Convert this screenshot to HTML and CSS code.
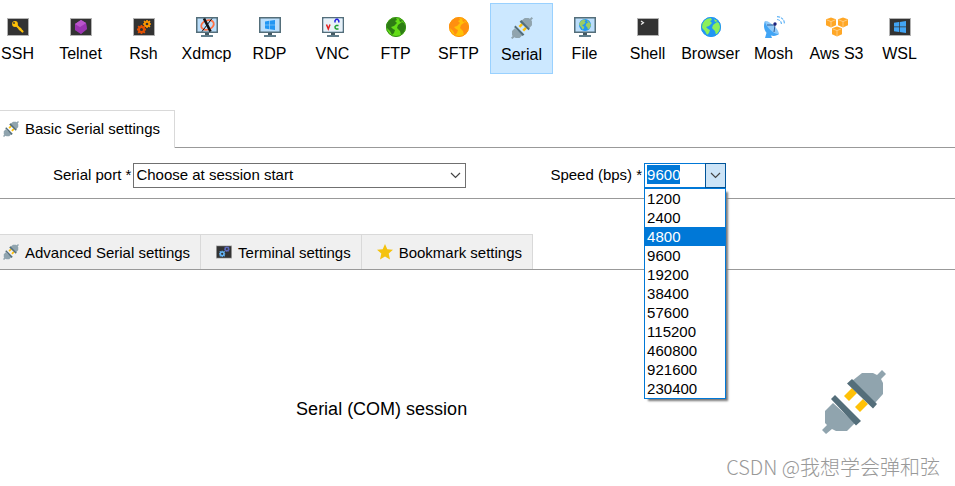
FILE: index.html
```html
<!DOCTYPE html>
<html lang="en">
<head>
<meta charset="utf-8">
<title>Session settings</title>
<link rel="stylesheet" href="styles.css">
</head>
<body>
<svg class="sprites" aria-hidden="true">
  <symbol id="plug" viewBox="0 0 64 64">
    <path fill="#ffc107" d="M22 26l5 5 8-8-5-5zM33 37l5 5 8-8-5-5z"/>
    <path fill="#90a4ae" d="M30 11l10-8h11l4 2 5-5 4 4-5 5 2 4v11l-8 9zM11 33l-8 8v12l2 2-5 5 4 4 6-5 4 2h11l8-8z"/>
    <path fill="#546e7a" d="M30 9l25 25-4 4.500-26-25zM13 25l26 26-5 4.500L9 29z"/>
  </symbol>
  <symbol id="term" viewBox="0 0 22 22">
    <path fill="#b3b3b3" d="M0 2h22v18H0z"/><path fill="#333" d="M1 3h20v16H1z"/>
  </symbol>
  <symbol id="monitor" viewBox="0 0 22 22">
    <path fill="#455a64" d="M9 16h4v3h-4z"/><path fill="#607d8b" d="M5 19h12v2H5z"/>
    <path fill="#546e7a" d="M0 1h22v16H0z"/><path fill="#bbdefb" d="M1.500 2.500h19v13h-19z"/>
  </symbol>
  <symbol id="land" viewBox="0 0 20 20">
    <path d="M2 5c2-3 5-4.500 8-4l1 2-2 1 2 2-3 3-3 1 2 2 2 1-1 3-2 2-2-4-3-3-1-3zM12 8l4-3 2 1 2 4-2 5-3 3-1-4-3-3zM13 2l4 2-3 1z"/>
  </symbol>
  <symbol id="gear" viewBox="0 0 10 10">
    <circle cx="5" cy="5" r="2.800" fill="none" stroke="currentColor" stroke-width="2.200"/>
    <path stroke="currentColor" stroke-width="2" d="M5 0v2M5 8v2M0 5h2M8 5h2M1.300 1.300l1.400 1.400M7.300 7.300l1.400 1.400M1.300 8.700l1.400-1.400M7.300 2.700l1.400-1.400"/>
  </symbol>
  <symbol id="windows" viewBox="0 0 12 12">
    <path d="M0 1.700L5 1v4.600H0zM5.700.900L12 0v5.600H5.700zM0 6.300h5V11l-5-.700zM5.700 6.300H12V12l-6.300-.900z"/>
  </symbol>
  <symbol id="cube" viewBox="0 0 11 11">
    <path fill="#ffa726" d="M5.500 0L11 2v6.500L5.500 11 0 8.500V2z"/>
    <path fill="none" stroke="#ffe0b2" stroke-width=".7" d="M.500 2.500l5 2 5-2M5.500 4.500V11"/>
  </symbol>
  <symbol id="chevron" viewBox="0 0 11 7">
    <path fill="none" stroke="#444" stroke-width="1.200" d="M1 1l4.500 4.500L10 1"/>
  </symbol>
</svg>

<nav class="toolbar" aria-label="Session type">
  <button type="button"><svg viewBox="0 0 22 22"><use href="#term"/><path stroke="#ffc107" stroke-width="2.200" stroke-linecap="round" d="M8.500 8.500l7 7"/><circle cx="8" cy="8" r="2.900" fill="#ffc107"/><path stroke="#ffc107" stroke-width="1.500" d="M12 14l2-2"/><circle cx="7" cy="7" r=".9" fill="#333"/></svg>SSH</button>
  <button type="button"><svg viewBox="0 0 22 22"><use href="#term"/><path fill="#ab47bc" d="M11 4l5 3 1 6-6 5-6-4V8z"/><path fill="#8e24aa" d="M5 8l5 3 1 7-6-4zM10 11l6-4 1 6-6 5z" opacity=".55"/><path fill="#ba55cc" d="M11 4l5 3-6 4-5-3z"/></svg>Telnet</button>
  <button type="button"><svg viewBox="0 0 22 22"><use href="#term"/><use class="gear-orange" href="#gear" x="10" y="4" width="8" height="8"/><use class="gear-red" href="#gear" x="4" y="9" width="9" height="9"/></svg>Rsh</button>
  <button type="button"><svg viewBox="0 0 22 22"><use href="#monitor"/><ellipse cx="11.500" cy="9" rx="6.500" ry="4.500" fill="none" stroke="#ff7043" stroke-width="1.800" transform="rotate(-20 11.500 9)"/><path stroke="#111" stroke-width="2.600" d="M8 2.500l6.500 13"/><path stroke="#111" stroke-width="1" d="M16 2.500L6 15.500"/></svg>Xdmcp</button>
  <button type="button"><svg viewBox="0 0 22 22"><use href="#monitor"/><use href="#windows" fill="#2196f3" x="6" y="4" width="10" height="10"/></svg>RDP</button>
  <button type="button"><svg viewBox="0 0 22 22"><use href="#monitor"/><path fill="#e8f1f8" d="M1.500 2.500h19v13h-19z"/><path fill="none" stroke="#e02020" stroke-width="1.500" d="M4.500 8.500l1.800 4.500L8 8.500"/><path fill="none" stroke="#2020e0" stroke-width="1.500" d="M13 6.500V4.700l1.200-1.400h1.400l1.200 1.400v1.800"/><path fill="none" stroke="#20a030" stroke-width="1.500" d="M16.500 9.500h-2.200l-1.200 1v1.500l1.200 1h2.200"/></svg>VNC</button>
  <button type="button"><svg viewBox="0 0 22 22"><circle cx="11" cy="11" r="10" fill="#64dd17"/><use href="#land" fill="#2e7d14" x="1" y="1" width="20" height="20"/><circle cx="11" cy="11" r="9.500" fill="none" stroke="#388e1c"/></svg>FTP</button>
  <button type="button"><svg viewBox="0 0 22 22"><circle cx="11" cy="11" r="10" fill="#ffc107"/><use href="#land" fill="#ff8f10" x="1" y="1" width="20" height="20"/><circle cx="11" cy="11" r="9.500" fill="none" stroke="#ff8f10"/></svg>SFTP</button>
  <button type="button" class="pressed" aria-pressed="true"><svg viewBox="0 0 22 22"><use href="#plug"/></svg>Serial</button>
  <button type="button"><svg viewBox="0 0 22 22"><use href="#monitor"/><circle cx="11" cy="9" r="6" fill="#2196f3"/><use href="#land" fill="#9ccc65" x="5" y="3" width="12" height="12"/></svg>File</button>
  <button type="button"><svg viewBox="0 0 22 22"><use href="#term"/><path fill="none" stroke="#eee" stroke-width="1.200" d="M4 5l2.500 1.800L4 8.500"/></svg>Shell</button>
  <button type="button"><svg viewBox="0 0 22 22"><circle cx="11" cy="11" r="10" fill="#2196f3"/><use href="#land" fill="#8bf05a" x="1" y="1" width="20" height="20"/><circle cx="11" cy="11" r="9.500" fill="none" stroke="#2196f3"/></svg>Browser</button>
  <button type="button"><svg viewBox="0 0 22 22"><path fill="#42a5f5" d="M4 15l-2 7h7l-2-5z"/><path fill="#42a5f5" d="M2 5C0 10 1 15 5 18s9 2 11 0z"/><path fill="#90caf9" d="M2 5c4-1 14 8 14 13-5 1-14-8-14-13z"/><path fill="none" stroke="#1a3f78" stroke-width=".8" d="M4 9h8l-1 7"/><circle cx="12" cy="8" r="1.700" fill="#1a237e"/><path fill="none" stroke="#64b5f6" stroke-width="1.200" stroke-dasharray="3 1" d="M14 3.500q4 .5 4.500 4.500M14 .600q7 .4 7.500 7.400"/></svg>Mosh</button>
  <button type="button"><svg viewBox="0 0 22 22"><use href="#cube" y="1" width="10" height="11"/><use href="#cube" x="12" y="1" width="10" height="11"/><use href="#cube" x="6" y="10" width="10" height="11"/></svg>Aws S3</button>
  <button type="button"><svg viewBox="0 0 22 22"><use href="#term"/><use href="#windows" fill="#42a5f5" x="5" y="5" width="12" height="12"/></svg>WSL</button>
</nav>

<div class="tabs basic" role="tablist">
  <button type="button" role="tab" aria-selected="true"><svg><use href="#plug"/></svg>Basic Serial settings</button>
</div>
<form class="fields">
  <label for="port">Serial port *</label>
  <div class="combo port">
    <select id="port"><option>Choose at session start</option></select>
    <svg><use href="#chevron"/></svg>
  </div>
  <label class="speed-label" for="speed">Speed (bps) *</label>
  <div class="combo speed">
    <input id="speed" type="text" value="9600" role="combobox" aria-expanded="true" aria-controls="rates">
    <button type="button" aria-label="Show speeds"><svg><use href="#chevron"/></svg></button>
    <ul id="rates" role="listbox">
      <li role="option">1200</li>
      <li role="option">2400</li>
      <li role="option" aria-selected="true">4800</li>
      <li role="option">9600</li>
      <li role="option">19200</li>
      <li role="option">38400</li>
      <li role="option">57600</li>
      <li role="option">115200</li>
      <li role="option">460800</li>
      <li role="option">921600</li>
      <li role="option">230400</li>
    </ul>
  </div>
</form>

<div class="tabs more" role="tablist">
  <button type="button" role="tab"><svg><use href="#plug"/></svg>Advanced Serial settings</button>
  <button type="button" role="tab"><svg viewBox="0 0 22 22"><use href="#term"/><use class="gear-violet" href="#gear" x="11" y="3" width="8" height="8"/><use class="gear-blue" href="#gear" x="4" y="9" width="9" height="9"/></svg>Terminal settings</button>
  <button type="button" role="tab"><svg viewBox="0 0 16 16"><path fill="#f4c20d" d="M8 0l2.300 5.300 5.700.500-4.300 3.800L13 15.500l-5-3-5 3 1.300-5.900L0 5.800l5.700-.5z"/></svg>Bookmark settings</button>
</div>
<main class="session">
  <h1>Serial (COM) session</h1>
  <svg><use href="#plug"/></svg>
</main>
<footer>CSDN @我想学会弹和弦</footer>
<script src="script.js"></script>
</body>
</html>
```
FILE: styles.css
```css
* { box-sizing: border-box; }

body {
  margin: 0;
  overflow-x: hidden;
  background: #fff;
  color: #000;
  font: 15px/19px "Liberation Sans", Arial, sans-serif;
}

button, input, select { font: inherit; color: inherit; }
button { border: 0; background: none; padding: 0; }
svg { flex: none; display: block; }
.sprites { position: absolute; width: 0; height: 0; }

.gear-orange { color: #ff9800; }
.gear-red { color: #e65100; }
.gear-violet { color: #5c6bc0; }
.gear-blue { color: #64b5f6; }

.toolbar {
  display: flex;
  margin: 3px 0 36px -14px;
}
.toolbar button {
  display: flex;
  flex-direction: column;
  align-items: center;
  gap: 7px;
  flex: none;
  width: 63px;
  height: 71px;
  padding-top: 13px;
  font-size: 16px;
  line-height: 18px;
  white-space: nowrap;
}
.toolbar svg { width: 22px; height: 22px; }
.toolbar .pressed {
  background: #cce8ff;
  border: 1px solid #99d1ff;
}

.tabs {
  display: flex;
  margin-left: -12px;
  border-bottom: 1px solid #999;
}
.tabs button {
  display: flex;
  align-items: center;
  gap: 6px;
  padding: 0 10px 0 15px;
  border: 1px solid #d9d9d9;
  border-width: 1px 1px 0 0;
  white-space: nowrap;
}
.tabs svg { width: 16px; height: 16px; }
.basic button {
  height: 38px;
  margin-bottom: -1px;
  padding: 0 14px 2px 15px;
  background: #fff;
}
.more { margin-top: 35px; }
.more button { height: 35px; background: #f0f0f0; }

.fields {
  display: flex;
  align-items: center;
  padding: 15px 0 10px 53px;
  border-bottom: 1px solid #999;
}
.fields label {
  margin-right: 2px;
  padding-bottom: 2px;
  white-space: nowrap;
}
.fields .speed-label { margin-left: 84px; }
.combo {
  position: relative;
  display: flex;
  height: 25px;
}
.port { width: 333px; }
.port select {
  width: 100%;
  padding: 0 2px 2px;
  appearance: none;
  border: 1px solid #707070;
  border-radius: 0;
  background: #fff;
}
.port svg { position: absolute; right: 5px; top: 9px; }
.combo svg { width: 11px; height: 7px; }

.speed { width: 82px; }
.speed input {
  flex: 1;
  min-width: 0;
  padding: 0 2px 2px;
  border: 1px solid #0078d7;
  border-right: 0;
  outline: 0;
}
.speed input::selection { background: #0078d7; color: #fff; }
.speed button {
  display: flex;
  align-items: center;
  justify-content: center;
  width: 21px;
  border: 1px solid #005499;
  background: #cce4f7;
}
.speed ul {
  position: absolute;
  z-index: 1;
  top: 100%;
  left: 0;
  width: 100%;
  margin: 0;
  padding: 0;
  list-style: none;
  border: 1px solid #0078d7;
  background: #fff;
  box-shadow: 3px 3px 2px -1px #777;
}
.speed li { padding: 0 2px; }
.speed li[aria-selected="true"] { background: #0078d7; color: #fff; }

.session {
  display: grid;
  grid-template-columns: 21fr 5fr;
  align-items: center;
  justify-items: center;
  padding: 100px 10px 0 0;
}
.session h1 {
  margin: 14px 0 0;
  font-size: 18px;
  line-height: 20px;
  font-weight: 400;
}
.session svg { width: 64px; height: 64px; }

footer {
  margin: 18px 15px 0 0;
  text-align: right;
  font: 300 20px/29px "Noto Sans CJK SC", sans-serif;
  color: #999;
}
```
FILE: script.js
```js
const speed = document.getElementById("speed");
speed.focus();
speed.select();
```
